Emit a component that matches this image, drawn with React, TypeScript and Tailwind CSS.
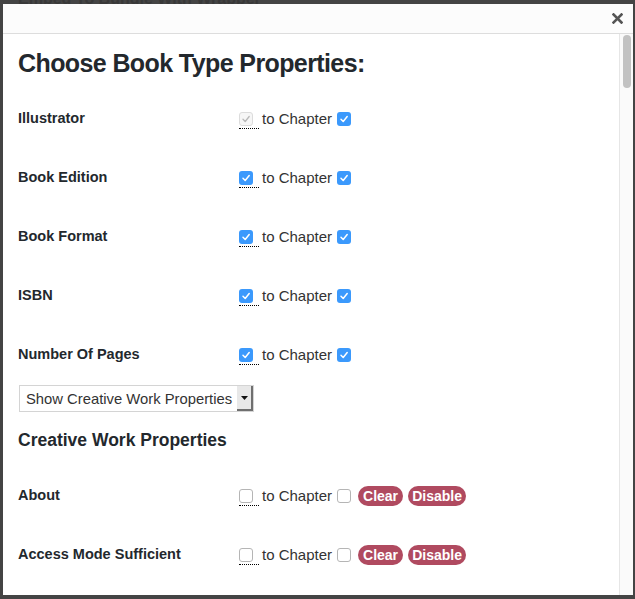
import React from "react";

/* ── CHECKBOX ── */
function Box({ state }: { state: "on" | "off" | "disabled" }) {
  if (state === "on") {
    return (
      <span className="inline-flex h-[14px] w-[14px] items-center justify-center rounded-[3px] bg-[#3b99fc]">
        <svg width="10" height="10" viewBox="0 0 10 10">
          <path d="M2 5.3 L4.2 7.5 L8.2 2.5" fill="none" stroke="#fff" strokeWidth="1.5" strokeLinecap="round" strokeLinejoin="round" />
        </svg>
      </span>
    );
  }
  if (state === "disabled") {
    return (
      <span className="inline-flex h-[14px] w-[14px] items-center justify-center rounded-[3px] border border-[#dcdcdc] bg-[#f6f6f6]">
        <svg width="10" height="10" viewBox="0 0 10 10">
          <path d="M2 5.3 L4.2 7.5 L8.2 2.5" fill="none" stroke="#b8b8b8" strokeWidth="1.3" strokeLinecap="round" strokeLinejoin="round" />
        </svg>
      </span>
    );
  }
  return <span className="inline-block h-[14px] w-[14px] rounded-[3px] border border-[#b5b5b5] bg-white" />;
}

/* ── PROPERTY ROW ── */
function Row({
  label,
  first,
  second,
  actions = false,
}: {
  label: string;
  first: "on" | "off" | "disabled";
  second: "on" | "off";
  actions?: boolean;
}) {
  return (
    <div className="flex h-[59px] items-center">
      <div className="w-[221px] text-[14.5px] font-bold text-[#23282d]">{label}</div>
      <span className="mt-[4px] inline-flex w-[20px] border-b border-dotted border-black pb-[2px]">
        <Box state={first} />
      </span>
      <span className="ml-[3px] mt-[1px] text-[15px] text-[#333]">to Chapter</span>
      <span className="ml-[5px] mt-[1px] inline-flex">
        <Box state={second} />
      </span>
      {actions && (
        <div className="ml-[7px] mt-[1px] flex gap-[5px]">
          <span className="flex h-[20px] w-[45px] items-center justify-center rounded-full bg-[#b04a60] text-[14px] font-bold text-white">
            Clear
          </span>
          <span className="flex h-[20px] w-[58px] items-center justify-center rounded-full bg-[#b04a60] text-[14px] font-bold text-white">
            Disable
          </span>
        </div>
      )}
    </div>
  );
}

export default function App() {
  return (
    <div
      className="h-[599px] w-[635px] overflow-hidden bg-[#444]"
      style={{ fontFamily: '"Liberation Sans", Arial, sans-serif' }}
    >
      {/* page text behind the overlay */}
      <div className="h-[4px] overflow-hidden">
        <div className="-mt-[13px] pl-[18px] text-[16px] font-bold text-[#383838]">Embed To Bundle With Wrapper</div>
      </div>

      {/* ── MODAL ── */}
      <div className="ml-[3px] flex h-[591px] w-[630px] flex-col bg-white">
        <div className="flex h-[30px] shrink-0 items-center justify-end border-b border-[#ddd] bg-[#fcfcfc] pr-[10px]">
          <svg width="11" height="11" viewBox="0 0 11 11">
            <path d="M1.5 1.5 L9.5 9.5 M9.5 1.5 L1.5 9.5" stroke="#555" strokeWidth="2.6" strokeLinecap="square" />
          </svg>
        </div>

        <div className="flex min-h-0 flex-1">
          <div className="flex-1 pl-[15px] pt-[13px]">
            <h2 className="text-[25px] font-bold leading-[32px] tracking-[-0.6px] text-[#23282d]">
              Choose Book Type Properties:
            </h2>

            <div className="mt-[10px]">
              <Row label="Illustrator" first="disabled" second="on" />
              <Row label="Book Edition" first="on" second="on" />
              <Row label="Book Format" first="on" second="on" />
              <Row label="ISBN" first="on" second="on" />
              <Row label="Number Of Pages" first="on" second="on" />
            </div>

            <div className="ml-[1px] mt-[1px] flex h-[27px] w-[235px] items-stretch border border-[#d4d4d4] bg-white">
              <span className="flex flex-1 items-center pl-[6px] pt-[1px] text-[14.8px] text-[#333]">
                Show Creative Work Properties
              </span>
              <span className="flex w-[16px] items-center justify-center border-b-2 border-r-2 border-[#6f6f6f] bg-[#e8e8e8]">
                <svg width="7" height="4" viewBox="0 0 7 4">
                  <path d="M0 0 H7 L3.5 4 Z" fill="#111" />
                </svg>
              </span>
            </div>

            <h3 className="mt-[16px] text-[17.5px] font-bold leading-[24px] text-[#23282d]">Creative Work Properties</h3>

            <div className="mt-[14px]">
              <Row label="About" first="off" second="off" actions />
              <Row label="Access Mode Sufficient" first="off" second="off" actions />
            </div>
          </div>

          {/* scrollbar */}
          <div className="w-[14px] shrink-0 border-l border-[#e6e6e6] bg-[#fafafa] pl-[3px] pt-[1px]">
            <div className="h-[53px] w-[8px] rounded-full bg-[#c2c2c2]" />
          </div>
        </div>
      </div>

      <div className="h-[4px] overflow-hidden">
        <div className="pl-[113px] pt-[1px] text-[16px] text-[#1c1c1c]">
          By checking this you allow the Comment Type to show in the Metadata Level
        </div>
      </div>
    </div>
  );
}
